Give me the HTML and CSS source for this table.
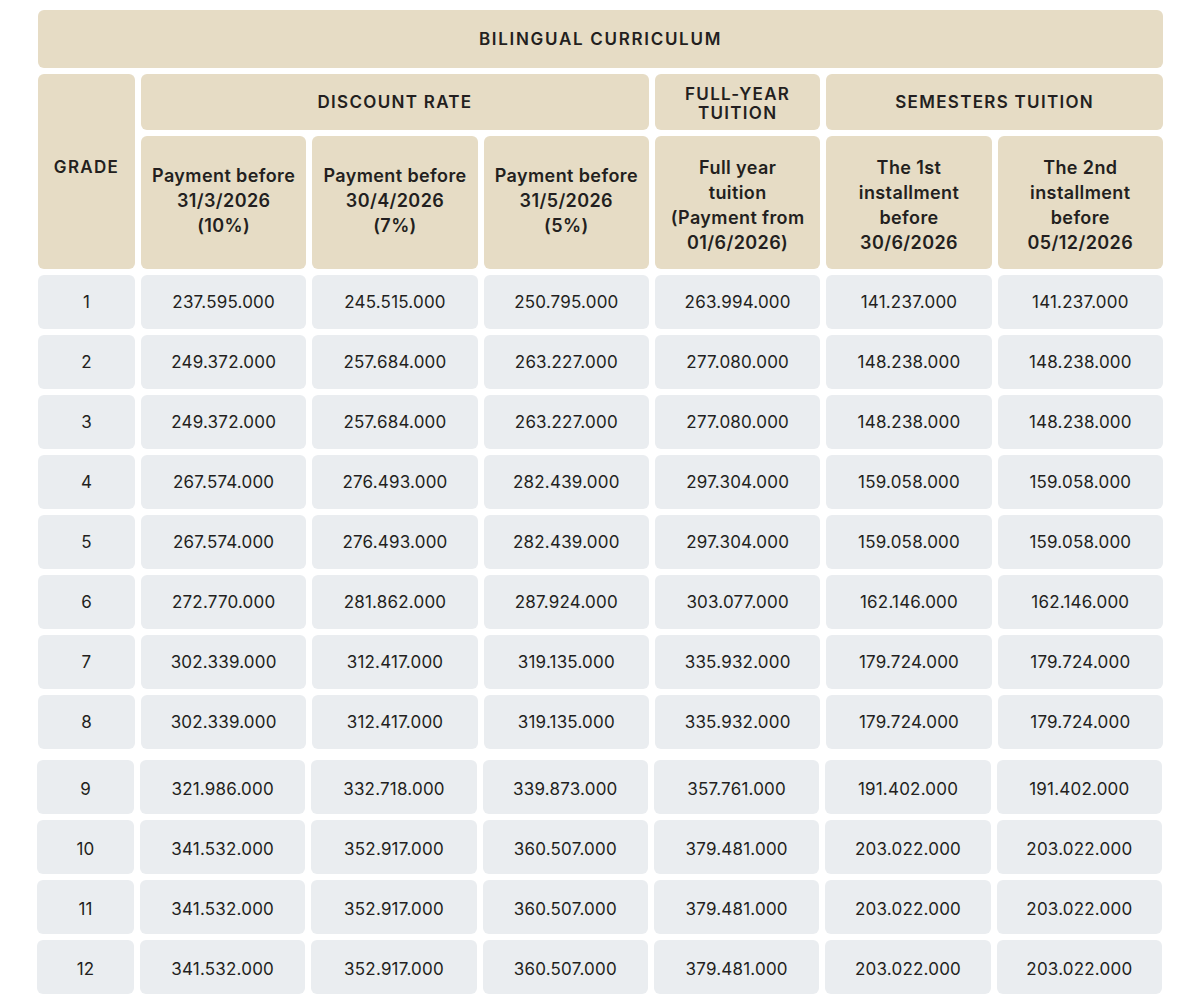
FILE: index.html
```html
<!DOCTYPE html>
<html>
<head>
<meta charset="utf-8">
<link rel="stylesheet" href="styles.css">
</head>
<body>
<div class="page">
  <div class="grid grid-top">
    <div class="cell head caps title">BILINGUAL CURRICULUM</div>
    <div class="cell head caps grade">GRADE</div>
    <div class="cell head caps span3">DISCOUNT RATE</div>
    <div class="cell head caps fy">FULL-YEAR<br>TUITION</div>
    <div class="cell head caps span2">SEMESTERS TUITION</div>
    <div class="cell head sub">Payment before<br>31/3/2026<br>(10%)</div>
    <div class="cell head sub">Payment before<br>30/4/2026<br>(7%)</div>
    <div class="cell head sub">Payment before<br>31/5/2026<br>(5%)</div>
    <div class="cell head sub sub4">Full year<br>tuition<br>(Payment from<br>01/6/2026)</div>
    <div class="cell head sub sub4">The 1st<br>installment<br>before<br>30/6/2026</div>
    <div class="cell head sub sub4">The 2nd<br>installment<br>before<br>05/12/2026</div>

    <div class="cell">1</div><div class="cell">237.595.000</div><div class="cell">245.515.000</div><div class="cell">250.795.000</div><div class="cell">263.994.000</div><div class="cell">141.237.000</div><div class="cell">141.237.000</div>
    <div class="cell">2</div><div class="cell">249.372.000</div><div class="cell">257.684.000</div><div class="cell">263.227.000</div><div class="cell">277.080.000</div><div class="cell">148.238.000</div><div class="cell">148.238.000</div>
    <div class="cell">3</div><div class="cell">249.372.000</div><div class="cell">257.684.000</div><div class="cell">263.227.000</div><div class="cell">277.080.000</div><div class="cell">148.238.000</div><div class="cell">148.238.000</div>
    <div class="cell">4</div><div class="cell">267.574.000</div><div class="cell">276.493.000</div><div class="cell">282.439.000</div><div class="cell">297.304.000</div><div class="cell">159.058.000</div><div class="cell">159.058.000</div>
    <div class="cell">5</div><div class="cell">267.574.000</div><div class="cell">276.493.000</div><div class="cell">282.439.000</div><div class="cell">297.304.000</div><div class="cell">159.058.000</div><div class="cell">159.058.000</div>
    <div class="cell">6</div><div class="cell">272.770.000</div><div class="cell">281.862.000</div><div class="cell">287.924.000</div><div class="cell">303.077.000</div><div class="cell">162.146.000</div><div class="cell">162.146.000</div>
    <div class="cell">7</div><div class="cell">302.339.000</div><div class="cell">312.417.000</div><div class="cell">319.135.000</div><div class="cell">335.932.000</div><div class="cell">179.724.000</div><div class="cell">179.724.000</div>
    <div class="cell">8</div><div class="cell">302.339.000</div><div class="cell">312.417.000</div><div class="cell">319.135.000</div><div class="cell">335.932.000</div><div class="cell">179.724.000</div><div class="cell">179.724.000</div>
  </div>
  <div class="grid grid-bottom">
    <div class="cell">9</div><div class="cell">321.986.000</div><div class="cell">332.718.000</div><div class="cell">339.873.000</div><div class="cell">357.761.000</div><div class="cell">191.402.000</div><div class="cell">191.402.000</div>
    <div class="cell">10</div><div class="cell">341.532.000</div><div class="cell">352.917.000</div><div class="cell">360.507.000</div><div class="cell">379.481.000</div><div class="cell">203.022.000</div><div class="cell">203.022.000</div>
    <div class="cell">11</div><div class="cell">341.532.000</div><div class="cell">352.917.000</div><div class="cell">360.507.000</div><div class="cell">379.481.000</div><div class="cell">203.022.000</div><div class="cell">203.022.000</div>
    <div class="cell">12</div><div class="cell">341.532.000</div><div class="cell">352.917.000</div><div class="cell">360.507.000</div><div class="cell">379.481.000</div><div class="cell">203.022.000</div><div class="cell">203.022.000</div>
  </div>
</div>
</body>
</html>
```

FILE: styles.css
```css
html, body {
  margin: 0;
  padding: 0;
  background: #ffffff;
}
body {
  font-family: "Inter", "Noto Sans", sans-serif;
  color: #231f20;
}
.page {
  padding-top: 10px;
}
.grid {
  display: grid;
  grid-template-columns: 97px repeat(6, 1fr);
  column-gap: 6px;
  row-gap: 6px;
  width: 1125px;
}
.grid-top {
  margin-left: 38px;
  grid-template-rows: 58px 56px 133px repeat(8, 54px);
}
.grid-bottom {
  margin-left: 37px;
  margin-top: 11px;
  grid-auto-rows: 54px;
}
.grid-bottom .cell {
  padding-top: 3px;
}
.cell {
  background: #eaedf0;
  border-radius: 6px;
  display: flex;
  align-items: center;
  justify-content: center;
  text-align: center;
  font-size: 17px;
  line-height: 24px;
  letter-spacing: 0.2px;
}
.head {
  background: #e6dcc5;
  font-weight: 600;
}
.caps {
  letter-spacing: 1.3px;
}
.title {
  grid-column: 1 / -1;
  letter-spacing: 1.7px;
}
.grade {
  grid-row: 2 / 4;
  padding-bottom: 10px;
}
.span3 {
  grid-column: span 3;
}
.span2 {
  grid-column: span 2;
}
.fy {
  line-height: 19px;
  padding-top: 4px;
}
.sub {
  font-size: 18px;
  line-height: 24.7px;
  letter-spacing: 0.4px;
  padding-bottom: 2px;
}
.sub4 {
  line-height: 25px;
  padding-top: 4px;
  padding-bottom: 0;
}
```
